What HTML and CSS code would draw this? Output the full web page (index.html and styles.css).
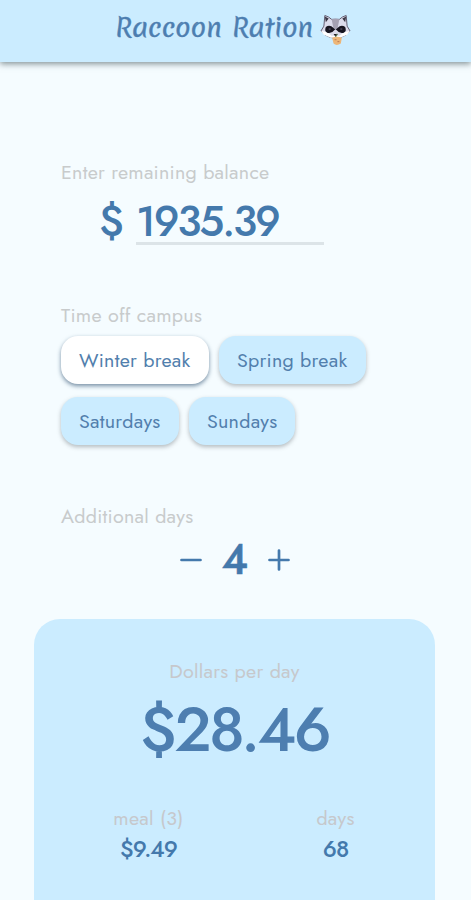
FILE: index.html
```html
<!DOCTYPE html>
<html lang="en">
<head>
<meta charset="utf-8">
<title>Raccoon Ration</title>
<link rel="stylesheet" href="styles.css">
</head>
<body>
<header class="header">
  <h1 class="title">Raccoon Ration</h1>
  <svg class="raccoon" viewBox="0 0 32 32" aria-hidden="true">
    <path d="M4 12 L5 1 Q9 2 12 5 H20 Q23 2 27 1 L28 12 L31 17 L27 21 Q16 28 5 21 L1 17Z" fill="#dcdcec" stroke="#605b70" stroke-width="1"/>
    <path d="M5 2 L9 4 L6 8Z M27 2 L23 4 L26 8Z" fill="#3b3746"/>
    <path d="M12 5 Q16 3 20 5 L18 15 H14Z" fill="#a5a1b3"/>
    <path d="M1 17 L7 18 L12 22 H20 L25 18 L31 17 L28 21 L21 24 H11 L4 21Z" fill="#fff"/>
    <path d="M6 13 Q10 10 14 14 L16 16 L18 14 Q22 10 26 13 Q28 18 24 19 Q20 20 17 16 H15 Q12 20 8 19 Q4 18 6 13Z" fill="#171520"/>
    <path d="M9 15 h2 M21 15 h2" stroke="#6d6880"/>
    <path d="M14 20 h4 l-2 3z" fill="#252029"/>
    <path d="M12.500 24 Q17 22 22.500 24 L21.500 30 Q17 33 14 30Z" fill="#edb678"/>
    <path d="M15 26 h2 M18 28 h2" stroke="#ba7852"/>
    <path d="M16 23 l2 -3" stroke="#547451" stroke-width="1.200"/>
  </svg>
</header>
<main class="main">
  <section class="balance">
    <label class="label label-balance" for="amount">Enter remaining balance</label>
    <div class="amount-row"><span class="currency">$</span><input class="amount" id="amount" value="1935.39"></div>
  </section>
  <section class="time-off">
    <div class="label label-time">Time off campus</div>
    <div class="chips">
      <button class="chip winter">Winter break</button>
      <button class="chip spring">Spring break</button>
      <button class="chip saturdays">Saturdays</button>
      <button class="chip sundays">Sundays</button>
    </div>
  </section>
  <section class="additional">
    <div class="label label-additional">Additional days</div>
    <div class="stepper">
      <svg class="step" viewBox="0 0 22 22"><path d="M1.500 11H20.500"/></svg>
      <span class="count">4</span>
      <svg class="step" viewBox="0 0 22 22"><path d="M1.500 11H20.500M11 1.500V20.500"/></svg>
    </div>
  </section>
</main>
<section class="card">
  <div class="label label-dollars">Dollars per day</div>
  <div class="total">$28.46</div>
  <div class="stats">
    <div class="stat"><div class="label label-meal">meal (3)</div><div class="value">$9.49</div></div>
    <div class="stat"><div class="label label-days">days</div><div class="value value-days">68</div></div>
  </div>
</section>
</body>
</html>
```
FILE: styles.css
```css
* { box-sizing: border-box; }
body {
  margin: 0;
  height: 900px;
  overflow: hidden;
  background: #f5fcff;
  color: #4479ac;
  font-family: Jost, Lato, sans-serif;
}
.header {
  height: 62px;
  display: flex;
  padding: 10px 0 0 115px;
  background: #cbecff;
  box-shadow: 0 2px 6px rgba(70, 90, 95, .65);
}
.title {
  margin: 0;
  width: 205px;
  font: 400 25.6px/36px Merienda, Lato, sans-serif;
  letter-spacing: -.35px;
  word-spacing: 2px;
  -webkit-text-stroke: .4px currentColor;
  white-space: nowrap;
  color: #4d7eb0;
}
.raccoon { width: 31px; height: 32px; margin-top: 4px; }
.main { padding: 98px 61px 0; }
.label {
  display: block;
  font-size: 19.7px;
  font-weight: 400;
  letter-spacing: .25px;
  line-height: 24px;
  color: #c8cbcc;
  white-space: nowrap;
}
.balance { height: 143px; }
.amount-row { display: flex; padding: 17px 0 0 38px; }
.currency, .amount { font-size: 42px; line-height: 42px; font-weight: 500; letter-spacing: -2.2px; }
.currency { width: 37px; }
.amount {
  width: 188px;
  height: 44px;
  padding: 0;
  border: 0;
  border-bottom: 3px solid #dce4e8;
  background: none;
  color: inherit;
  font-family: inherit;
}
.time-off { height: 201px; }
.chips { display: flex; flex-wrap: wrap; gap: 13px 10px; padding-top: 9px; }
.chip {
  height: 48px;
  padding: 0 0 0 18px;
  border: 0;
  border-radius: 17px;
  background: #cbecff;
  box-shadow: 0 2px 4px rgba(80, 90, 95, .4);
  color: #527fad;
  font: 400 19.7px/48px Jost, Lato, sans-serif;
  letter-spacing: .25px;
  text-align: left;
  white-space: nowrap;
}
.winter { width: 148px; background: #fff; box-shadow: 0 2px 4px rgba(50, 85, 115, .65); }
.spring { width: 147px; }
.saturdays { width: 118px; }
.sundays { width: 106px; }
.stepper { display: flex; align-items: center; padding: 7px 0 0 119px; }
.step { width: 22px; height: 22px; fill: none; stroke: #4479ac; stroke-width: 2.7; stroke-linecap: round; }
.count { width: 66px; text-align: center; font-size: 42px; line-height: 50px; font-weight: 500; -webkit-text-stroke: .5px currentColor; }
.additional { height: 115px; }
.card {
  width: 401px;
  height: 320px;
  margin-left: 34px;
  padding-top: 40px;
  border-radius: 26px;
  background: #cbecff;
  text-align: center;
}
.card .label { color: #c6c8cc; }
.total { height: 123px; font-size: 62px; line-height: 94px; font-weight: 500; letter-spacing: -2.8px; color: #4d7eb0; }
.stats { display: grid; grid-template-columns: 201px 201px; padding-left: 14px; }
.stat { width: 201px; }
.value { font-size: 23px; line-height: 38px; font-weight: 500; letter-spacing: -1px; }
.stat:last-child { margin-left: -14px; }
```
